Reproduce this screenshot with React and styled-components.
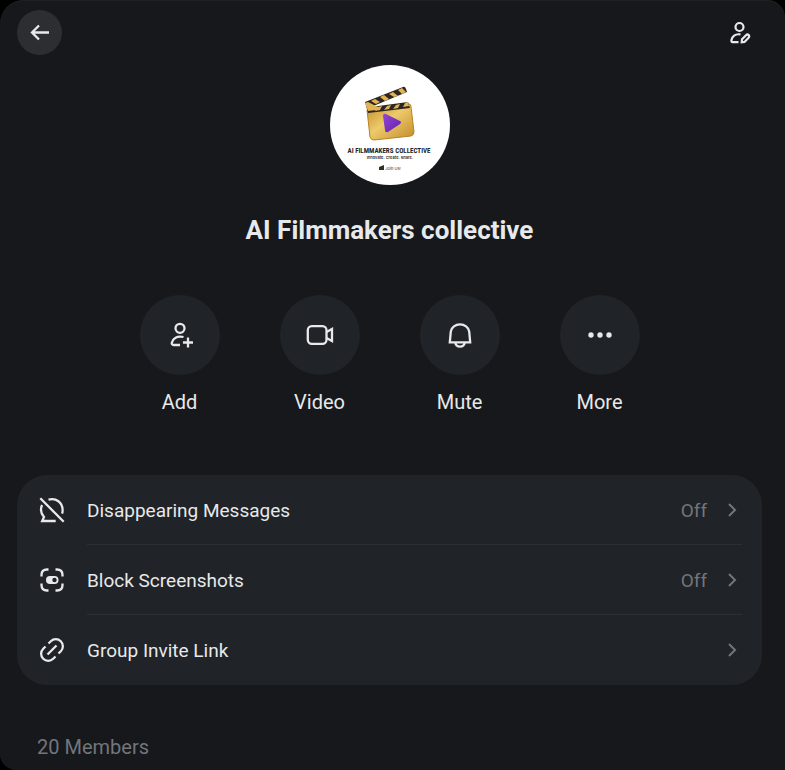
import React from 'react';
import styled, { createGlobalStyle } from 'styled-components';

const GlobalStyle = createGlobalStyle`
  body {
    margin: 0;
    background: #000;
    color: #e7e9ea;
    font-family: Roboto, "Liberation Sans", sans-serif;
  }
  button {
    border: 0;
    padding: 0;
    background: none;
    color: inherit;
    font: inherit;
    cursor: pointer;
  }
`;

const Panel = styled.main`
  box-sizing: border-box;
  min-height: 100vh;
  padding: 10px 23px 8px 17px;
  border-radius: 24px 18px 0 16px;
  background: #17181c;
  box-shadow: inset 0 1px #1f2024;
`;

const TopBar = styled.header`
  display: flex;
  justify-content: space-between;
  height: 55px;
`;

const RoundButton = styled.button`
  display: grid;
  place-items: center;
  width: 45px;
  height: 45px;
  border-radius: 50%;
  background: ${({ $filled }) => ($filled ? '#2d2e32' : 'transparent')};
`;

const Profile = styled.section`
  display: flex;
  flex-direction: column;
  align-items: center;
`;

const Avatar = styled.svg`
  width: 120px;
  height: 120px;
  border-radius: 50%;
  background: #fff;
`;

const GroupName = styled.h1`
  margin: 29px 0 48px;
  font-size: 26px;
  line-height: 33px;
  font-weight: 700;
`;

const Actions = styled.div`
  display: flex;
  justify-content: center;
  gap: 60px;
  margin-bottom: 60px;
`;

const ActionButton = styled.button`
  display: flex;
  flex-direction: column;
  align-items: center;
  gap: 15px;
  width: 80px;
  font-size: 20px;
  line-height: 25px;
`;

const Circle = styled.span`
  display: grid;
  place-items: center;
  width: 80px;
  height: 80px;
  border-radius: 50%;
  background: #202327;
`;

const Settings = styled.section`
  border-radius: 30px;
  background: #202327;
  overflow: hidden;
`;

const SettingRow = styled.button`
  display: flex;
  align-items: center;
  gap: 20px;
  width: 100%;
  height: 70px;
  padding: 0 20px;
  font-size: 19px;
  line-height: 25px;
  text-align: left;
`;

const RowBody = styled.span`
  display: flex;
  flex: 1;
  align-items: center;
  justify-content: space-between;
  height: 70px;
  box-shadow: ${({ $last }) => ($last ? 'none' : 'inset 0 -1px #2c2f33')};
`;

const RowValue = styled.span`
  display: flex;
  align-items: center;
  gap: 15px;
  color: #71767b;
`;

const Members = styled.h2`
  margin: 50px 20px 0;
  color: #71767b;
  font-size: 20px;
  line-height: 25px;
  font-weight: 400;
`;

const Icon = ({ size = 30, width = 2.3, children }) => (
  <svg
    width={size}
    height={size}
    viewBox={`0 0 ${size} ${size}`}
    fill="none"
    stroke="currentColor"
    strokeWidth={width}
    aria-hidden="true"
  >
    {children}
  </svg>
);

const BackIcon = () => (
  <Icon>
    <path d="M24 14.500H7M14 7.500l-7 7 7 7" />
  </Icon>
);

const EditIcon = () => (
  <Icon width={2.2}>
    <circle cx="14.500" cy="9" r="4" />
    <path d="M15.500 16.400C10 15.500 7 18.500 6.400 22.200c-.2 1.300.5 2 1.600 2h5.500" />
    <path d="M16.700 24.300l.3-3 4-4.100c.9-.9 2-.8 2.700-.1s.7 1.800-.1 2.600l-4.100 4.200z" />
  </Icon>
);

const AddIcon = () => (
  <Icon>
    <circle cx="15" cy="8.300" r="4.500" />
    <path d="M18.500 17c-6.500-1.600-10.700 1.400-11.700 5.700-.3 1.300.5 2.300 1.800 2.300H15M23 17.500v10M18 22.500h10" />
  </Icon>
);

const VideoIcon = () => (
  <Icon>
    <rect x="2.800" y="6.200" width="18.700" height="17.600" rx="4" />
    <path d="M21.500 12l5.500-3v12l-5.500-3" />
  </Icon>
);

const BellIcon = () => (
  <Icon>
    <path d="M4.800 22.300h20.400L24.200 11.500a9.300 8.300 0 0 0-18.400 0zM10.200 22.500c.5 2.700 2.300 4.200 4.800 4.200s4.300-1.500 4.800-4.200" />
  </Icon>
);

const MoreIcon = () => (
  <Icon>
    <g fill="currentColor" stroke="none">
      <circle cx="6" cy="15" r="2.700" />
      <circle cx="15" cy="15" r="2.700" />
      <circle cx="24" cy="15" r="2.700" />
    </g>
  </Icon>
);

const DisappearingIcon = () => (
  <Icon>
    <path d="M3.300 3.300l23.400 23.400M11.500 4.700C19 2.500 25.800 7.500 25.600 15.500c0 1.300-.2 2.200-.5 3.200M5 10c-1.700 4.200-1 8.800 2 12l-1.800 4h13.500" />
  </Icon>
);

const ScreenshotIcon = () => (
  <Icon>
    <path d="M4.500 11.500V10q0-5.500 5.500-5.500H11.500M18.500 4.500h1.500Q25.500 4.500 25.500 10v1.500M25.500 18.500V20q0 5.500-5.500 5.500H18.500M11.500 25.500H10Q4.500 25.500 4.500 20v-1.500" />
    <rect x="9" y="11" width="12.500" height="8" rx="4" fill="currentColor" stroke="none" />
    <circle cx="17.500" cy="15" r="2.200" fill="#202327" stroke="none" />
  </Icon>
);

const LinkIcon = () => (
  <Icon>
    <path d="M10.500 19.500l9-9M11.500 8.500l2.300-2.300a7 7 0 0 1 10 10l-2.300 2.300M18.500 21.500l-2.300 2.300a7 7 0 0 1-10-10l2.300-2.300" />
  </Icon>
);

const Chevron = () => (
  <Icon size={20} width={2}>
    <path d="M7 4l6 6-6 6" />
  </Icon>
);

const GroupLogo = () => (
  <Avatar viewBox="0 0 120 120" role="img" aria-label="AI Filmmakers collective">
    <defs>
      <linearGradient id="gold" x1="0" y1="0" x2="1" y2="1">
        <stop offset="0" stopColor="#c58b26" />
        <stop offset="0.45" stopColor="#edca6b" />
        <stop offset="1" stopColor="#c28a28" />
      </linearGradient>
      <linearGradient id="purple" x1="0" y1="0" x2="1" y2="1">
        <stop offset="0" stopColor="#9446d2" />
        <stop offset="1" stopColor="#6220ae" />
      </linearGradient>
    </defs>
    <path d="M37 45L79 39Q81 39 81 42L84 67Q84 70 81 71L44 75Q41 75 40 72Z" fill="url(#gold)" stroke="#b88125" />
    <path d="M35 37L73 22Q75 21 76 24L77 27L41 42L78 37L80 43L38 48Z" fill="#2b2622" />
    <path d="M41 36l4-2 5 3-4 2zM50 32l4-2 5 4-4 2zM59 29l4-2 5 4-4 1zM68 25l4-2 4 4-4 2zM48 42l4-1-2 4-5 1zM57 41l4-1-2 4-5 1zM66 40l4-1-2 4-5 1zM75 38l3-1 1 4-6 1zM35 38l3-1 10 5-2 3-8 1z" fill="#e3b353" />
    <path d="M53 51Q53 48 56 49L70 56Q72 57 70 59L58 67Q55 68 55 65Z" fill="url(#purple)" />
    <g fill="#242426" textAnchor="middle">
      <text x="59" y="88" fontSize="7" fontWeight="700" fontFamily='"Liberation Sans Narrow", "Roboto Condensed", sans-serif'>AI FILMMAKERS COLLECTIVE</text>
      <text x="60" y="94" fontSize="4" fontWeight="600" fontFamily="Inter, sans-serif">Innovate. Create. Share.</text>
      <text x="63" y="105" fontSize="4" fontFamily="Inter, sans-serif">Join Us!</text>
    </g>
    <path d="M49 102l5-2v5h-5z" fill="#363024" />
  </Avatar>
);

const actions = [
  { label: 'Add', Glyph: AddIcon },
  { label: 'Video', Glyph: VideoIcon },
  { label: 'Mute', Glyph: BellIcon },
  { label: 'More', Glyph: MoreIcon },
];

const settings = [
  { label: 'Disappearing Messages', value: 'Off', Glyph: DisappearingIcon },
  { label: 'Block Screenshots', value: 'Off', Glyph: ScreenshotIcon },
  { label: 'Group Invite Link', Glyph: LinkIcon },
];

export default () => (
  <>
    <GlobalStyle />
    <Panel>
      <TopBar>
        <RoundButton $filled aria-label="Back"><BackIcon /></RoundButton>
        <RoundButton aria-label="Edit group"><EditIcon /></RoundButton>
      </TopBar>
      <Profile>
        <GroupLogo />
        <GroupName>AI Filmmakers collective</GroupName>
      </Profile>
      <Actions>
        {actions.map(({ label, Glyph }) => (
          <ActionButton key={label}>
            <Circle><Glyph /></Circle>
            {label}
          </ActionButton>
        ))}
      </Actions>
      <Settings>
        {settings.map(({ label, value, Glyph }, i) => (
          <SettingRow key={label}>
            <Glyph />
            <RowBody $last={i === settings.length - 1}>
              {label}
              <RowValue>
                {value}
                <Chevron />
              </RowValue>
            </RowBody>
          </SettingRow>
        ))}
      </Settings>
      <Members>20 Members</Members>
    </Panel>
  </>
);
